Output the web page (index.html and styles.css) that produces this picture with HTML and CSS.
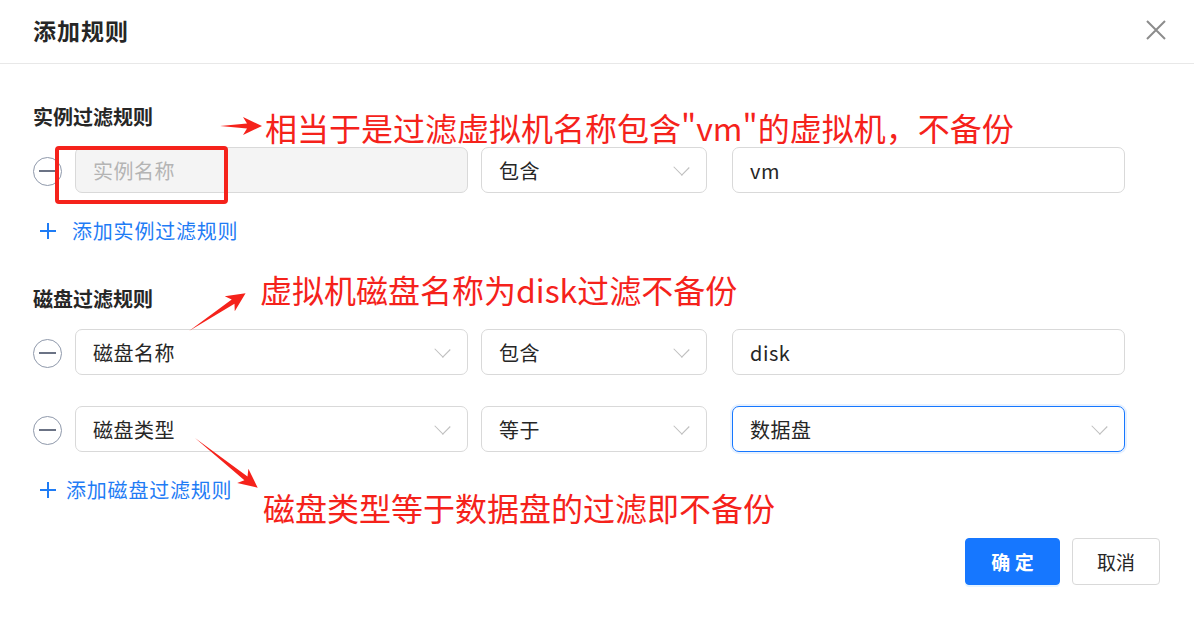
FILE: index.html
```html
<!DOCTYPE html>
<html lang="zh-CN">
<head>
    <meta charset="UTF-8">
    <meta name="viewport" content="width=device-width, initial-scale=1.0">
    <title>添加规则</title>
    <link rel="stylesheet" href="styles.css">
</head>
<body>
    <div class="dialog">
        <div class="dialog-header">
            <h2>添加规则</h2>
            <button class="close-btn" type="button" aria-label="关闭">
                <svg width="20" height="20" viewBox="0 0 20 20"><path d="M1 1 L19 19 M19 1 L1 19" stroke="#8c8c8c" stroke-width="2" fill="none"/></svg>
            </button>
        </div>

        <div class="dialog-body">
            <div class="section-title">实例过滤规则</div>
            <div class="rule-row">
                <span class="remove-btn"></span>
                <div class="field field-wide field-disabled"><span class="placeholder">实例名称</span></div>
                <div class="field field-narrow"><span>包含</span><i class="chevron"></i></div>
                <div class="field field-wide"><span>vm</span></div>
            </div>
            <a class="add-link add-link-first" href="#"><span class="plus"></span>添加实例过滤规则</a>

            <div class="section-title section-second">磁盘过滤规则</div>
            <div class="rule-row">
                <span class="remove-btn"></span>
                <div class="field field-wide"><span>磁盘名称</span><i class="chevron"></i></div>
                <div class="field field-narrow"><span>包含</span><i class="chevron"></i></div>
                <div class="field field-wide"><span>disk</span></div>
            </div>
            <div class="rule-row rule-row-next">
                <span class="remove-btn"></span>
                <div class="field field-wide"><span>磁盘类型</span><i class="chevron"></i></div>
                <div class="field field-narrow"><span>等于</span><i class="chevron"></i></div>
                <div class="field field-wide field-focus"><span>数据盘</span><i class="chevron"></i></div>
            </div>
            <a class="add-link" href="#"><span class="plus"></span>添加磁盘过滤规则</a>
        </div>

        <div class="dialog-footer">
            <button class="btn btn-primary" type="button">确 定</button>
            <button class="btn btn-cancel" type="button">取消</button>
        </div>
    </div>

    <!-- annotations drawn over the screenshot -->
    <div class="mark-box"></div>
    <svg class="arrows" width="1194" height="619" viewBox="0 0 1194 619">
        <g transform="translate(220 126)">
            <polygon points="0,0 27,-2.5 23,-9 42,0 23,9 27,2.5" fill="#f5221b"/>
        </g>
        <g transform="translate(189 331) rotate(-33.7)">
            <polygon points="0,0 53,-2.5 49,-9 68,0 49,9 53,2.5" fill="#f5221b"/>
        </g>
        <g transform="translate(195 438) rotate(38.4)">
            <polygon points="0,0 65,-2.5 61,-9 80,0 61,9 65,2.5" fill="#f5221b"/>
        </g>
    </svg>
    <div class="note note-1">相当于是过滤虚拟机名称包含"vm"的虚拟机，不备份</div>
    <div class="note note-2">虚拟机磁盘名称为disk过滤不备份</div>
    <div class="note note-3">磁盘类型等于数据盘的过滤即不备份</div>
</body>
</html>
```

FILE: styles.css
```css
body {
    margin: 0;
    font-family: "Noto Sans CJK SC", "Noto Sans", sans-serif;
    background-color: #fff;
    color: #262626;
}
.dialog {
    position: relative;
    width: 1194px;
    height: 619px;
    background-color: #fff;
}
.dialog-header {
    height: 64px;
    border-bottom: 1px solid #e8e8e8;
    display: flex;
    align-items: center;
    justify-content: space-between;
    padding: 0 28px 0 33px;
    box-sizing: border-box;
}
.dialog-header h2 {
    margin: 0;
    font-size: 23px;
    font-weight: 700;
    color: #262626;
    letter-spacing: 1px;
    margin-top: -4px;
}
.close-btn {
    border: none;
    background: none;
    padding: 0;
    width: 20px;
    height: 20px;
    cursor: pointer;
    margin-top: -4px;
}
.close-btn svg {
    display: block;
}
.dialog-body {
    padding: 39px 0 0 33px;
}
.section-title {
    font-size: 20px;
    font-weight: 700;
    line-height: 28px;
    margin-bottom: 16px;
    color: #262626;
}
.section-second {
    margin-top: 40px;
}
.rule-row {
    display: flex;
    align-items: center;
    height: 46px;
}
.rule-row-next {
    margin-top: 31px;
}
.remove-btn {
    position: relative;
    width: 27px;
    height: 27px;
    border: 1.5px solid #8f99ab;
    border-radius: 50%;
    margin-right: 13px;
    margin-top: 2px;
    flex: none;
}
.remove-btn::after {
    content: "";
    position: absolute;
    left: 5px;
    right: 5px;
    top: 12.5px;
    height: 1.5px;
    background-color: #6b7385;
}
.field {
    position: relative;
    height: 46px;
    box-sizing: border-box;
    border: 1px solid #d9d9d9;
    border-radius: 7px;
    background-color: #fff;
    display: flex;
    align-items: center;
    padding: 0 17px;
    font-size: 20px;
    letter-spacing: 0.5px;
    color: #262626;
    flex: none;
}
.field-wide {
    width: 393px;
}
.field-narrow {
    width: 226px;
    margin-right: 25px;
}
.field-wide + .field-narrow {
    margin-left: 13px;
}
.field-disabled {
    background-color: #f4f4f4;
}
.placeholder {
    color: #b4b4b4;
}
.field-focus {
    border-color: #1677ff;
    box-shadow: 0 0 0 2px rgba(22, 119, 255, 0.1);
}
.chevron {
    position: absolute;
    right: 19px;
    top: 14px;
    width: 10px;
    height: 10px;
    border-right: 1px solid #bfbfbf;
    border-bottom: 1px solid #bfbfbf;
    transform: rotate(45deg) scaleX(1.1);
}
.add-link {
    display: flex;
    align-items: center;
    margin-top: 24px;
    font-size: 20px;
    line-height: 28px;
    color: #1f7cf5;
    text-decoration: none;
    letter-spacing: 0.8px;
}
.plus {
    position: relative;
    width: 16px;
    height: 16px;
    margin-left: 7px;
    margin-right: 10px;
}
.add-link-first .plus {
    margin-right: 16px;
}
.plus::before,
.plus::after {
    content: "";
    position: absolute;
    background-color: #1f7cf5;
}
.plus::before {
    left: 0;
    right: 0;
    top: 7px;
    height: 2px;
}
.plus::after {
    top: 0;
    bottom: 0;
    left: 7px;
    width: 2px;
}
.dialog-footer {
    display: flex;
    justify-content: flex-end;
    gap: 12px;
    padding-right: 34px;
    margin-top: 34px;
}
.btn {
    height: 47px;
    padding: 0;
    border: 1px solid #d9d9d9;
    border-radius: 4px;
    background-color: #fff;
    font-family: inherit;
    font-size: 19px;
    color: #262626;
    cursor: pointer;
}
.btn-cancel {
    width: 88px;
}
.btn-primary {
    width: 95px;
    border-color: #1677ff;
    background-color: #1677ff;
    color: #fff;
    font-weight: 700;
    box-shadow: 0 2px 0 rgba(5, 145, 255, 0.1);
}
.mark-box {
    position: absolute;
    left: 55px;
    top: 146px;
    width: 173px;
    height: 58px;
    box-sizing: border-box;
    border: 4px solid #f5221b;
    border-radius: 4px;
}
.arrows {
    position: absolute;
    left: 0;
    top: 0;
    pointer-events: none;
}
.note {
    position: absolute;
    color: #f5221b;
    font-family: "Noto Sans CJK SC", sans-serif;
    line-height: 40px;
    white-space: nowrap;
    font-size: 32px;
}
.note-1 {
    left: 265px;
    top: 107px;
}
.note-2 {
    left: 260px;
    top: 269px;
}
.note-3 {
    left: 263px;
    top: 487px;
}
```
